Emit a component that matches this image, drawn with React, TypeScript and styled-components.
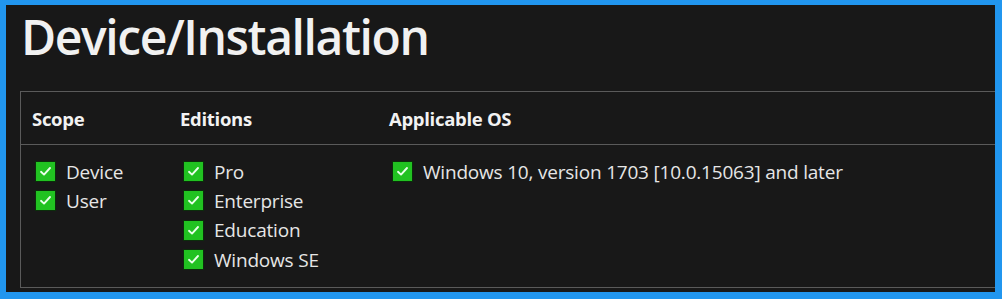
import styled, { createGlobalStyle } from 'styled-components';

const GlobalStyle = createGlobalStyle`
  html, body {
    margin: 0;
    padding: 0;
    background-color: #2196ef;
  }
  body {
    width: 1002px;
    height: 299px;
    overflow: hidden;
    font-family: 'Open Sans', 'Noto Sans', sans-serif;
  }
`;

const Frame = styled.div`
  box-sizing: border-box;
  width: 1002px;
  height: 299px;
  padding: 5px 7px 7px 6px;
`;

const Panel = styled.div`
  height: 100%;
  background-color: #181818;
  overflow: hidden;
  padding-left: 14px;
  box-sizing: border-box;
`;

const Title = styled.h1`
  margin: 0;
  padding: 0 0 0 1px;
  height: 86px;
  box-sizing: border-box;
  font-size: 48px;
  font-weight: 550;
  letter-spacing: -1.4px;
  line-height: 64px;
  color: #f1f1f1;
`;

const Table = styled.div`
  width: 1000px;
  border: 1px solid #5a5a5a;
  border-right: none;
  display: grid;
  grid-template-columns: 148px 209px 1fr;
`;

const HeadCell = styled.div`
  height: 52px;
  border-bottom: 1px solid #5a5a5a;
  padding-left: 11px;
  display: flex;
  align-items: center;
  font-size: 18.5px;
  font-weight: 700;
  letter-spacing: -0.3px;
  color: #f2f2f2;
`;

const BodyCell = styled.div`
  height: 142px;
  padding: 12px 0 0 14px;
  box-sizing: border-box;
  display: flex;
  flex-direction: column;
`;

const Item = styled.div`
  display: flex;
  align-items: center;
  gap: 10px;
  height: 29.3px;
  font-size: 19px;
  letter-spacing: -0.2px;
  color: #e6e6e6;
`;

const Check = styled.span`
  width: 21px;
  height: 21px;
  flex: none;
  box-sizing: border-box;
  background-color: #21c221;
  border: 1px solid #0b2e0b;
  display: flex;
  align-items: center;
  justify-content: center;
`;

const CheckMark = () => (
  <Check>
    <svg width="15" height="15" viewBox="0 0 15 15">
      <path d="M3 7.8 L6 10.6 L12 4" fill="none" stroke="#eaffea" strokeWidth="1.9" strokeLinecap="round" strokeLinejoin="round" />
    </svg>
  </Check>
);

const columns = [
  { head: 'Scope', items: ['Device', 'User'] },
  { head: 'Editions', items: ['Pro', 'Enterprise', 'Education', 'Windows SE'] },
  { head: 'Applicable OS', items: ['Windows 10, version 1703 [10.0.15063] and later'] },
];

export default function App() {
  return (
    <>
      <GlobalStyle />
      <Frame>
        <Panel>
          <Title>Device/Installation</Title>
          <Table>
            {columns.map((c) => (
              <HeadCell key={c.head}>{c.head}</HeadCell>
            ))}
            {columns.map((c) => (
              <BodyCell key={c.head}>
                {c.items.map((i) => (
                  <Item key={i}>
                    <CheckMark />
                    {i}
                  </Item>
                ))}
              </BodyCell>
            ))}
          </Table>
        </Panel>
      </Frame>
    </>
  );
}
